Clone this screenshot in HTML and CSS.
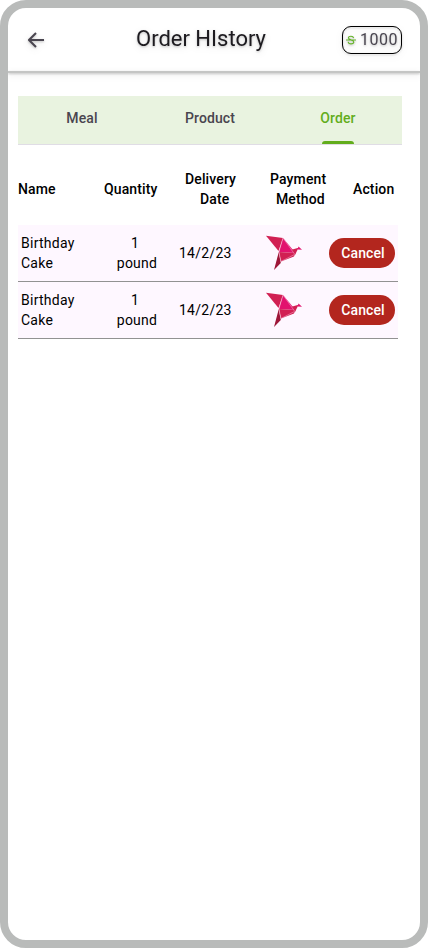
FILE: index.html
```html
<!DOCTYPE html>
<html lang="en">
<head>
<meta charset="utf-8">
<title>Order History</title>
<link rel="stylesheet" href="styles.css">
</head>
<body>
<svg width="0" height="0" class="defs" aria-hidden="true">
  <symbol id="bird" viewBox="0 0 36 36">
    <path fill="#d12053" d="M0 .8 17 3 12.500 16Z"/>
    <path fill="#e2136e" d="M17 3 29.500 18 13 17Z"/>
    <path fill="#d12053" d="M13 17 29.500 18 28 21.500 15 26.500Z"/>
    <path fill="#9e1638" d="M12.800 17 14.800 28 8 35Z"/>
    <path fill="#d12053" d="M25.500 14.700 32.500 12.800 29 20Z"/>
    <path fill="#e2136e" d="M32.500 11.500 36 14.800 31.500 14.500Z"/>
    <path fill="none" stroke="#f7b9d1" stroke-width=".5" d="M17 3 12.900 17 15 26.500 28.500 19.500M17 3 28.500 19"/>
  </symbol>
</svg>
<div class="phone">
  <header class="bar">
    <svg class="back" viewBox="0 0 16 16" width="16" height="16"><path d="M16 8H1.500M8 1 1 8l7 7"/></svg>
    <h1>Order HIstory</h1>
    <div class="points">
      <svg viewBox="0 0 10 10" width="10" height="10"><path d="M7.700 3.200C7.400 1.900 6.400 1.200 5 1.200S2.400 1.900 2.400 3.100C2.400 5.200 7.800 4.600 7.800 7c0 1.200-1.300 1.900-2.800 1.900S2.300 8.100 2.200 6.800M0 5h10"/></svg>
      <span>1000</span>
    </div>
  </header>
  <main>
    <nav class="tabs">
      <a>Meal</a><a>Product</a><a class="active">Order</a>
    </nav>
    <section class="orders">
      <div class="row head">
        <div>Name</div><div>Quantity</div><div class="two"><span>Delivery</span><span class="date">Date</span></div><div class="two pay"><span>Payment</span><span class="method">Method</span></div><div>Action</div>
      </div>
      <div class="row item">
        <div>Birthday<br>Cake</div><div class="qty"><span class="count">1</span><br>pound</div><div>14/2/23</div><svg class="bird"><use href="#bird"/></svg><button>Cancel</button>
      </div>
      <div class="row item">
        <div>Birthday<br>Cake</div><div class="qty"><span class="count">1</span><br>pound</div><div>14/2/23</div><svg class="bird"><use href="#bird"/></svg><button>Cancel</button>
      </div>
    </section>
  </main>
</div>
</body>
</html>
```
FILE: styles.css
```css
* { box-sizing: border-box; }
body { margin: 0; background: #fff; font-family: Roboto, sans-serif; }
.defs { display: block; }
.phone { height: 948px; border: 8px solid #b9bbba; border-radius: 26px; background: #fff; overflow: hidden; }
.bar {
  height: 65px;
  padding: 0 18px 0 20px;
  display: grid;
  grid-template-columns: 108px 1fr 60px;
  align-items: center;
  border-bottom: 2px solid #c4c5c4;
  filter: drop-shadow(0 1px 1px rgba(0, 0, 0, .22)) drop-shadow(0 2px 3px rgba(0, 0, 0, .1));
}
.back { fill: none; stroke: #49454f; stroke-width: 2; }
h1 { margin: -1px 0 0; font-size: 22px; line-height: 28px; font-weight: 400; color: #1d1b20; }
.points {
  height: 28px;
  border: 1px solid #000;
  border-radius: 9px;
  display: flex;
  align-items: center;
  gap: 4px;
  padding-left: 3px;
  font-size: 16px;
  letter-spacing: .5px;
  color: #49454f;
}
.points svg { fill: none; stroke: #65b32a; stroke-width: 1.1; }
main { padding: 23px 10px 0; }
.tabs {
  width: 384px;
  height: 49px;
  display: grid;
  grid-template-columns: repeat(3, 1fr);
  background: #e9f3e0;
  border-bottom: 1px solid #e0dde5;
}
.tabs a {
  position: relative;
  padding-top: 12px;
  text-align: center;
  font-size: 14px;
  line-height: 20px;
  font-weight: 500;
  letter-spacing: .1px;
  color: #49454f;
}
.tabs .active { color: #62ad1c; }
.tabs .active::after {
  content: "";
  position: absolute;
  left: 48px;
  bottom: 0;
  width: 32px;
  height: 3px;
  border-radius: 3px 3px 0 0;
  background: #62ad1c;
}
.orders { width: 380px; }
.row { display: grid; align-items: center; font-size: 14px; line-height: 20px; color: #000; }
.head { height: 80px; padding-top: 8px; grid-template-columns: 86px 81px 85px 83px 1fr; font-weight: 500; letter-spacing: .13px; }
.two { display: flex; flex-direction: column; }
.date { padding-left: 15px; }
.method { padding-left: 6px; }
.item { height: 57px; padding-left: 3px; grid-template-columns: 95px 63px 87px 63px 66px; background: #fef7ff; border-bottom: 1px solid #929292; letter-spacing: .25px; }
.qty { width: 42px; text-align: center; }
.count { padding-right: 4px; }
.bird { width: 36px; height: 36px; }
button { height: 30px; padding: 0 0 0 2px; border: 0; border-radius: 15px; background: #b3261e; color: #fff; font: 500 14px/20px Roboto, sans-serif; letter-spacing: .1px; }
```
